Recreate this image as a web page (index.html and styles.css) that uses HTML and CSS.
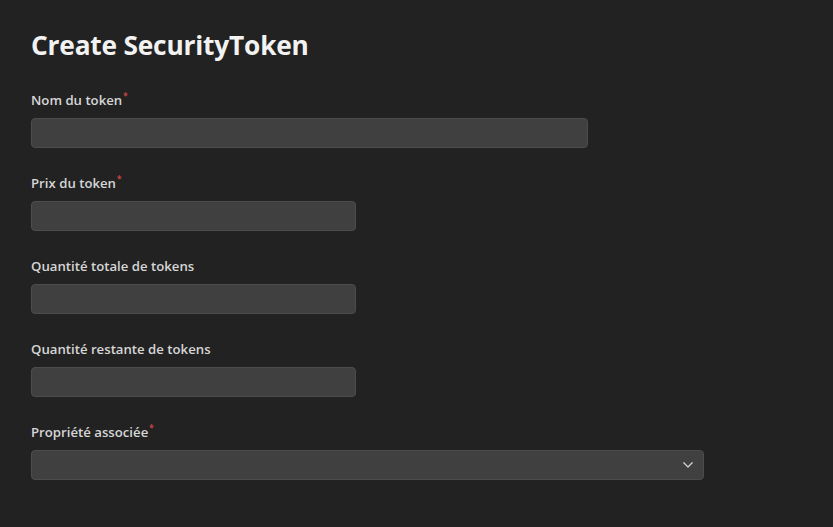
FILE: index.html
```html
<!DOCTYPE html>
<html lang="fr">
<head>
<meta charset="utf-8">
<title>Create SecurityToken</title>
<link rel="stylesheet" href="styles.css">
</head>
<body>
<main class="page">
  <h1 class="title">Create SecurityToken</h1>
  <form class="form">
    <div class="field">
      <label class="label">Nom du token<span class="req">*</span></label>
      <input class="input input-wide" type="text">
    </div>
    <div class="field">
      <label class="label">Prix du token<span class="req">*</span></label>
      <input class="input input-short" type="text">
    </div>
    <div class="field">
      <label class="label">Quantité totale de tokens</label>
      <input class="input input-short" type="text">
    </div>
    <div class="field">
      <label class="label">Quantité restante de tokens</label>
      <input class="input input-short" type="text">
    </div>
    <div class="field">
      <label class="label">Propriété associée<span class="req">*</span></label>
      <div class="select">
        <svg class="chev" width="10" height="6" viewBox="0 0 10 6"><path d="M0.8 0.8 L5 5 L9.2 0.8" fill="none" stroke="#d0d0d0" stroke-width="1.3" stroke-linecap="round" stroke-linejoin="round"/></svg>
      </div>
    </div>
  </form>
</main>
</body>
</html>
```
FILE: styles.css
```css
html, body {
  margin: 0;
  padding: 0;
  background: #222222;
}
body {
  font-family: "Open Sans", "Noto Sans", sans-serif;
  color: #d8d8d8;
}
.page {
  padding: 26px 31px 0 31px;
}
.title {
  margin: 0 0 26px 0;
  font-size: 26.3px;
  line-height: 38px;
  font-weight: 700;
  color: #f2f2f2;
  letter-spacing: -0.2px;
}
.form {
  display: flex;
  flex-direction: column;
  gap: 25px;
}
.field {
  display: flex;
  flex-direction: column;
  gap: 8px;
}
.label {
  font-size: 13.2px;
  line-height: 20px;
  height: 20px;
  font-weight: 600;
  color: #d6d6d6;
}
.req {
  color: #c84545;
  font-size: 8px;
  font-weight: 700;
  line-height: 0;
  vertical-align: 6px;
  margin-left: 1px;
}
.input, .select {
  box-sizing: border-box;
  height: 30px;
  background: #404040;
  border: 1px solid #4c4c4c;
  border-radius: 4px;
  outline: none;
  padding: 0 8px;
  margin: 0;
}
.input-wide { width: 557px; }
.input-short { width: 325px; }
.select {
  width: 673px;
  display: flex;
  align-items: center;
  justify-content: flex-end;
  padding-right: 10px;
}
.chev { display: block; }
```
